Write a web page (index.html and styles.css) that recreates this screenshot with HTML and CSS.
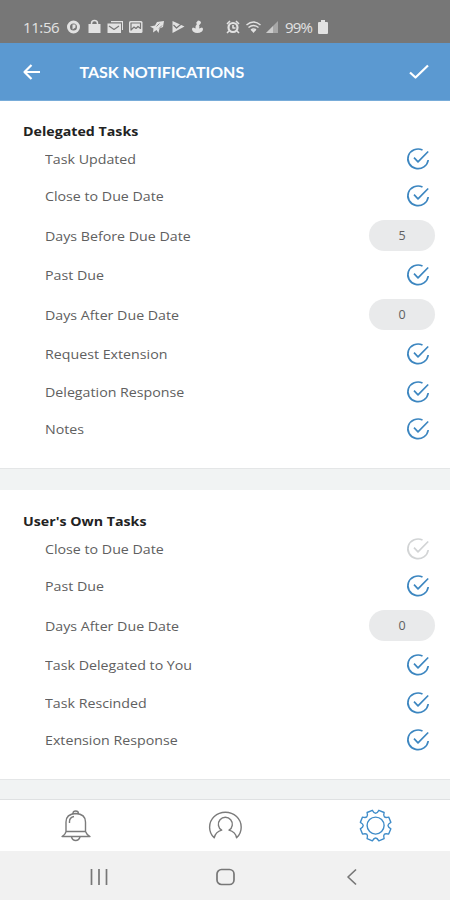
FILE: index.html
```html
<!DOCTYPE html>
<html lang="en">
<head>
<meta charset="utf-8">
<title>Task Notifications</title>
<link rel="stylesheet" href="styles.css">
</head>
<body>
<svg class="defs" aria-hidden="true">
  <symbol id="check" viewBox="0 0 24 24"><path d="M16.500 3A10.200 9.800 0 1 0 22.200 13M8 10.700l4 4.100L22.200 4.500"/></symbol>
</svg>
<div class="status">
  <span class="time">11:56</span>
  <svg class="notices" viewBox="0 0 140 16">
    <circle cx="7.500" cy="8" r="5" fill="none" stroke="currentColor" stroke-width="3"/><path d="M6.500 5.500h3v3l-3 2z"/>
    <path d="M22.500 5h12v9h-12z"/><path d="M25.500 6V4.500a3 3 0 0 1 6 0V6" fill="none" stroke="currentColor" stroke-width="1.500"/>
    <path d="M45 2h12v9h-1V3.200H45zM41.500 4.500H55V14H41.500z"/><path class="cut" d="m43 7 5 3.500L53 7"/>
    <rect x="63" y="2" width="13.500" height="12" rx="1.500"/><path class="cut" d="M65 4h9.500v5.500l-2.500-2-2 2-2-1.500-3 3z"/>
    <path d="m84 7.500 5-1 2-3.500 7-1-1 6-3.500 1.500-1 4.500-2-3-3.500 2.500.5-4z"/><path class="cut thin" d="m90.500 7.500 3-3M93 9.500l3-3"/>
    <path d="m106.500 2 12 5.500-12 6.500z"/><path class="cut" d="m107.500 6 3 3 6-5"/>
    <path d="M132 1.500q3 0 3 2.500l-2 2.500q1 1 0 3l3-1q2 1 0 4-5 3-9 0-2-3 0-4l2.500 1q-.5-3 1.500-4.500l-1-1z"/>
  </svg>
  <svg class="signals" viewBox="0 0 54 16">
    <circle cx="8" cy="8.500" r="4.500" fill="none" stroke="currentColor" stroke-width="2.200"/><path d="m2 5 3-3M14 5l-3-3M4 12l-2 2M12 12l2 2M8 6v3h2.500" fill="none" stroke="currentColor" stroke-width="1.600"/>
    <path d="M21.500 6q7-6 14 0M23.500 8.500q5-4 10 0M26 11q2.500-2 5 0" fill="none" stroke="currentColor" stroke-width="1.500"/><path d="m26 11 2.500 3 2.500-3z"/>
    <path d="M41 14 53 2v12z" opacity=".45"/><path d="M41 14l7-7v7z" opacity=".6"/>
  </svg>
  <span class="percent">99%</span>
  <svg class="battery" viewBox="0 0 10 14"><path d="M3 0h4v2h2q1 0 1 1v10q0 1-1 1H1q-1 0-1-1V3q0-1 1-1h2z"/></svg>
</div>
<header class="bar">
  <svg class="back" viewBox="0 0 20 18"><path d="M18 9H2.500M9.500 2l-7 7 7 7"/></svg>
  <h1>TASK NOTIFICATIONS</h1>
  <svg class="save" viewBox="0 0 20 16"><path d="m1 8.500 5.500 5L19 1.500"/></svg>
</header>
<main>
  <section class="group delegated">
    <h2><span>Delegated Tasks</span></h2>
    <ul>
      <li><span class="label">Task Updated</span><svg class="tick"><use href="#check"/></svg></li>
      <li><span class="label">Close to Due Date</span><svg class="tick"><use href="#check"/></svg></li>
      <li class="days"><span class="label">Days Before Due Date</span><span class="pill">5</span></li>
      <li><span class="label">Past Due</span><svg class="tick"><use href="#check"/></svg></li>
      <li class="days"><span class="label">Days After Due Date</span><span class="pill">0</span></li>
      <li><span class="label">Request Extension</span><svg class="tick"><use href="#check"/></svg></li>
      <li><span class="label">Delegation Response</span><svg class="tick"><use href="#check"/></svg></li>
      <li><span class="label">Notes</span><svg class="tick"><use href="#check"/></svg></li>
    </ul>
  </section>
  <section class="group own">
    <h2><span>User's Own Tasks</span></h2>
    <ul>
      <li><span class="label">Close to Due Date</span><svg class="tick off"><use href="#check"/></svg></li>
      <li><span class="label">Past Due</span><svg class="tick"><use href="#check"/></svg></li>
      <li class="days"><span class="label">Days After Due Date</span><span class="pill">0</span></li>
      <li><span class="label">Task Delegated to You</span><svg class="tick"><use href="#check"/></svg></li>
      <li><span class="label">Task Rescinded</span><svg class="tick"><use href="#check"/></svg></li>
      <li><span class="label">Extension Response</span><svg class="tick"><use href="#check"/></svg></li>
    </ul>
  </section>
</main>
<nav class="tabs">
  <svg viewBox="0 0 34 34"><path d="M8 22.500V13q0-8 9.700-8.500Q27.500 5 27.500 13v9.500M8 22.500h19.500M8 22.500q-.5 3-4 5h28q-3.500-2-4.500-5M15 4.500Q15 2 17.700 2t2.700 2.500M13.500 28q1 3.500 4.200 3.500T22 28M11.500 14v-1.500q0-4 4.500-5"/></svg>
  <svg viewBox="0 0 34 34"><path d="M6.200 28.800A15.800 15 0 1 1 28.600 28.800Q27.500 23 21 21.200A7 7 0 1 0 13.700 21.200Q7.500 23 6.200 28.800Z"/></svg>
  <svg class="active" viewBox="0 0 34 34"><g transform="translate(.6 -.4)"><circle cx="17" cy="17" r="8.500"/><path d="M32.260 13.760Q26.500 17 32.260 20.240L30.080 25.500Q23.700 23.700 25.500 30.080L20.240 32.260Q17 26.500 13.760 32.260L8.500 30.080Q10.300 23.700 3.920 25.500L1.740 20.240Q7.500 17 1.740 13.760L3.920 8.500Q10.300 10.300 8.500 3.920L13.760 1.740Q17 7.500 20.240 1.740L25.500 3.920Q23.700 10.300 30.080 8.500Z"/></g></svg>
</nav>
<footer class="system">
  <svg viewBox="0 0 20 20"><path d="M2.500 2v16M10 2v16M17.500 2v16"/></svg>
  <svg viewBox="0 0 20 20"><rect x="2" y="2.500" width="17" height="15" rx="4.500"/></svg>
  <svg viewBox="0 0 20 20"><path d="M15 2.500 7 10l8 7.500"/></svg>
</footer>
</body>
</html>
```
FILE: styles.css
```css
* { box-sizing: border-box; }
body {
  margin: 0;
  height: 900px;
  display: flex;
  flex-direction: column;
  overflow: hidden;
  background: #f1f3f3;
  font-family: "Open Sans", sans-serif;
}
svg { display: block; flex: none; stroke-linejoin: round; }
h1, h2, ul { margin: 0; padding: 0; }
.defs { position: absolute; width: 0; height: 0; }

.status {
  height: 43px;
  flex: none;
  padding: 11px 0 0 23px;
  display: flex;
  align-items: center;
  background: #777;
  color: #e2e2e2;
  font: 15px "Open Sans", sans-serif;
}
.status svg { fill: currentColor; }
.time { width: 43px; letter-spacing: -0.4px; }
.status .cut { fill: none; stroke: #777; stroke-width: 1.2; }
.status .thin { stroke-width: 0.8; }
.notices { width: 140px; height: 16px; }
.signals { width: 54px; height: 16px; margin-left: 19px; }
.percent { width: 39px; padding-left: 6px; letter-spacing: -0.8px; }
.battery { width: 10px; height: 14px; }

.bar {
  height: 58px;
  flex: none;
  padding: 0 21px 0 22px;
  display: flex;
  align-items: center;
  background: #5b99d1;
  border-bottom: 1px solid #78acd9;
  color: #fff;
}
.bar svg { fill: none; stroke: currentColor; stroke-width: 2.2; }
.back { width: 20px; height: 18px; }
.bar h1 { margin-left: 37.5px; flex: 1; font: 700 16px Lato, sans-serif; letter-spacing: -0.03px; white-space: nowrap; }
.save { width: 20px; height: 16px; }

main { flex: none; height: 698px; }
.group { background: #fff; border-bottom: 1px solid #e4e6e7; }
.delegated { height: 368px; padding-top: 22px; }
.own { height: 290px; margin-top: 21px; padding-top: 23px; }
.group h2 { height: 17.35px; padding-left: 22.5px; font-size: 12.5px; line-height: 17.35px; color: #222; }
.group h2 span, .label { display: inline-block; transform: scaleX(1.137); transform-origin: left; }
ul { list-style: none; }
li {
  height: 37.35px;
  padding: 0 20px 0 44.5px;
  display: flex;
  align-items: center;
  justify-content: space-between;
  font-size: 12.5px;
  color: #606060;
}
.label { padding-top: 1px; }
.days { height: 41.6px; padding-right: 15px; }
.tick { width: 24px; height: 24px; fill: none; stroke: #3c86c0; stroke-width: 1.7; }
.tick.off { stroke: #d2d4d5; }
.pill {
  width: 66px;
  height: 31px;
  border-radius: 16px;
  background: #e9eaeb;
  text-align: center;
  line-height: 32px;
}

.tabs {
  height: 52px;
  flex: none;
  display: grid;
  grid-template-columns: repeat(3, 1fr);
  place-items: center;
  background: #fff;
  border-top: 1px solid #dfe1e2;
}
.tabs svg { width: 34px; height: 34px; fill: none; stroke: #7b7b7b; stroke-width: 1.4; overflow: visible; }
.tabs .active { stroke: #3f8cc9; }
.system {
  height: 49px;
  flex: none;
  padding: 2px 0 0;
  display: grid;
  grid-template-columns: repeat(3, 126px);
  justify-content: center;
  place-items: center;
  background: #f1f1f1;
}
.system svg { width: 20px; height: 20px; fill: none; stroke: #777; stroke-width: 1.7; }
```
